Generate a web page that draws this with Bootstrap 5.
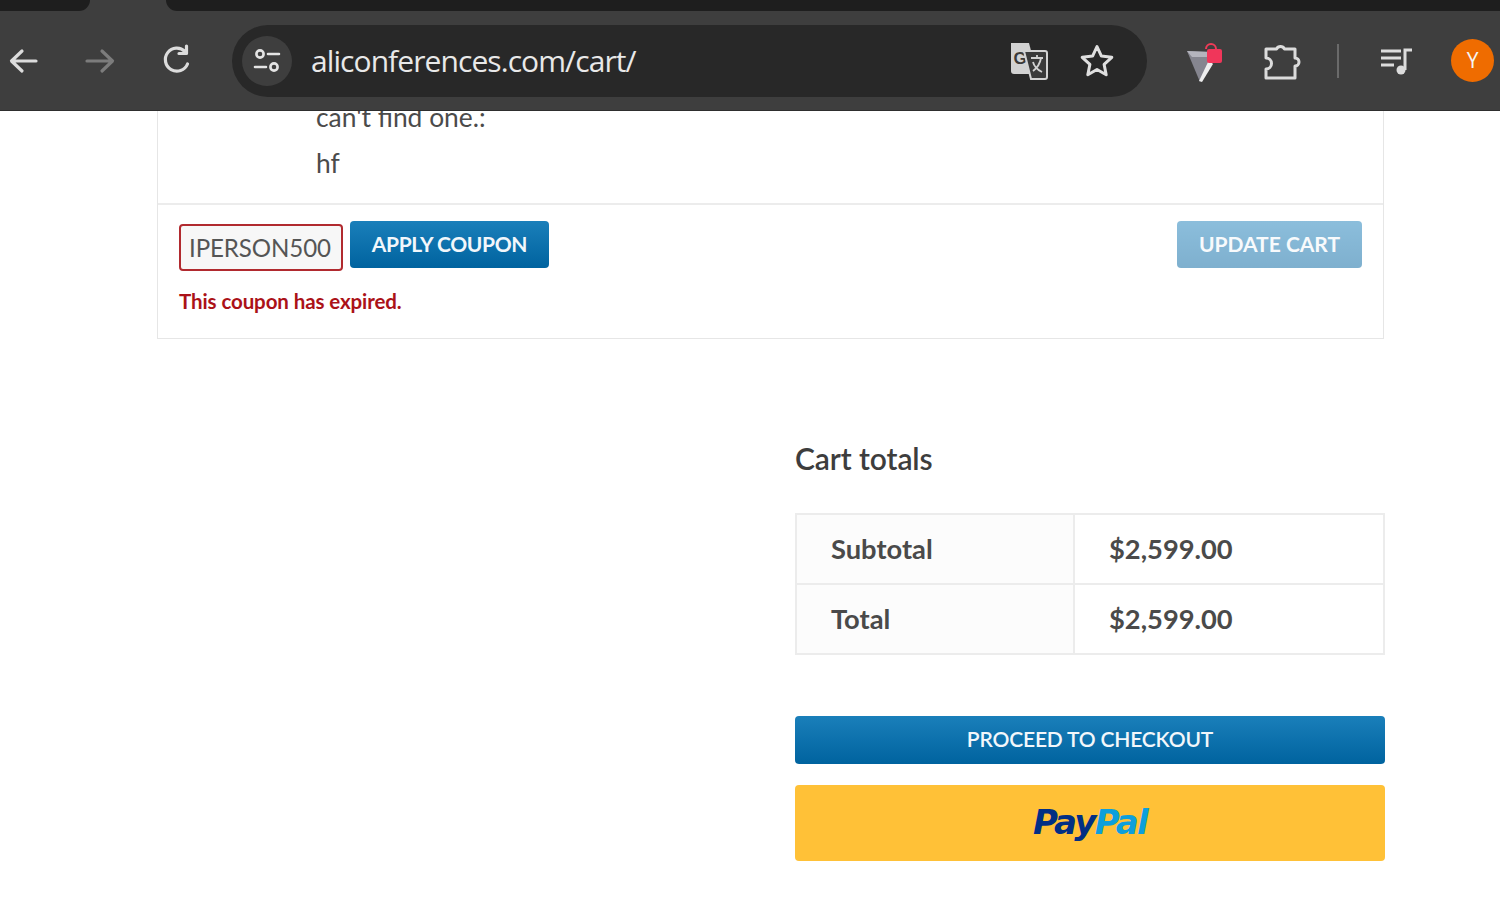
<!doctype html>
<html lang="en">
<head>
<meta charset="utf-8">
<title>Cart</title>
<link href="https://cdn.jsdelivr.net/npm/bootstrap@5.3.0/dist/css/bootstrap.min.css" rel="stylesheet">
<style>
html,body{height:897px;overflow:hidden;background:#fff}
body{font-family:Lato,"Open Sans",sans-serif;color:#444}
.tabstrip{height:11px;background:#3e3e3e}
.tab-left{width:90px;background:#1e1e1e;border-bottom-right-radius:14px}
.tab-right{margin-left:76px;background:#1e1e1e;border-bottom-left-radius:14px}
.tool-row{height:100px;background:#3e3e3e;padding-right:6px;border-bottom:1px solid #2e2e2e}
.nav-ic{width:76px;height:60px;flex:none}
.omni{width:915px;height:72px;margin-left:4px;border-radius:36px;background:#282828;padding:0 32px 0 10px}
.tune{width:50px;height:50px;border-radius:50%;background:#3e3e3e;flex:none}
.url{font-family:"Open Sans",sans-serif;font-size:30px;letter-spacing:-.92px;color:#e9e9e9;margin-left:19px;line-height:1}
.gap-star{margin-left:30px}
.gap-vpn{margin-left:37px}
.gap-puzzle{margin-left:36px}
.sep{width:2px;height:34px;background:#6a6a6a;margin-left:35px}
.gap-music{margin-left:39px}
.avatar{width:43px;height:43px;border-radius:50%;background:#ef6c00;color:#f5f5f5;font-size:21px;font-family:"Open Sans",sans-serif;flex:none}
.cartbox{margin-left:157px;width:1227px;border:1px solid #e6e6e6;border-top:0;height:228px}
.note-cell{height:94px;border-bottom:2px solid #ececec;padding-left:158px;overflow:hidden;font-size:26.4px;line-height:31px}
.note-line{margin:-9px 0 0;color:#4b4b4b}
.note-two{margin:15px 0 0;color:#4b4b4b}
.act-cell{padding:16px 21px 0}
.coupon{width:164px;height:47px;border:2px solid #b12a2f;border-radius:4px;background:#f7f7f7;color:#555;font-size:24.1px;letter-spacing:-.1px;padding:0 8px;margin-top:3px}
.blue-btn{background:linear-gradient(#1a7fba,#00639f);color:#f2f7fb;border:0;border-radius:4px;font-weight:700;height:47px;font-size:21px;letter-spacing:-.35px;padding:0 0 2px;text-transform:uppercase}
.blue-btn:hover{background:linear-gradient(#1a7fba,#00639f);color:#f2f7fb}
.apply{width:199px;margin-left:7px}
.update{width:185px;opacity:.5;letter-spacing:0}
.err{color:#ab1218;font-weight:700;font-size:20.5px;letter-spacing:-.1px;margin-top:18px;line-height:24px}
.totals-wrap{margin:0 115px 0 795px;width:590px}
.tot-title{font-size:30px;font-weight:600;letter-spacing:-.1px;color:#3d3d3d;margin:101px 0 0;line-height:36px}
.tot-grid{margin-top:37px;border:2px solid #ececec;border-collapse:collapse;width:590px;table-layout:fixed;font-size:27.3px;font-weight:700;color:#4a4a4a}
.tot-grid th,.tot-grid td{height:70px;padding:1px 0 0 34px;border:2px solid #ececec;vertical-align:middle}
.tot-grid th{width:278px;background:#fcfcfc;font-weight:700}
.checkout{width:590px;height:48px;font-size:21px;letter-spacing:-.18px;margin-top:61px;font-weight:600}
.paypal{width:590px;height:76px;margin-top:21px;background:#ffc137;border:0;border-radius:4px;font-family:"DejaVu Sans",sans-serif;font-size:34px;font-style:italic;font-weight:700;letter-spacing:-1.7px;line-height:1;padding:0 0 2px}
.paypal:hover{background:#ffc137}
.pp-a{color:#022f84}.pp-b{color:#0d9fdc}
</style>
</head>
<body>
<header>
  <div class="tabstrip d-flex"><div class="tab-left"></div><div class="tab-right flex-grow-1"></div></div>
  <div class="tool-row d-flex align-items-center">
    <svg class="nav-ic" viewBox="0 0 76 60" fill="none" stroke="#dcdcdc" stroke-width="3.2" stroke-linecap="round" stroke-linejoin="round"><path d="M36 30H12M22 20 11.500 30 22 40"/></svg>
    <svg class="nav-ic" viewBox="0 0 76 60" fill="none" stroke="#7c7c7c" stroke-width="3.2" stroke-linecap="round" stroke-linejoin="round"><path d="M11 30h25M26 20l10.500 10L26 40"/></svg>
    <svg class="nav-ic" viewBox="0 0 76 60" fill="none" stroke="#dcdcdc" stroke-width="3.2" stroke-linecap="round" stroke-linejoin="round"><path d="M33 20.500A11.500 11.500 0 1 0 35.500 33M34.500 15v7.500H27"/></svg>
    <div class="omni d-flex align-items-center">
      <div class="tune d-flex align-items-center justify-content-center">
        <svg width="30" height="30" viewBox="0 0 30 30" fill="none" stroke="#e4e4e4" stroke-width="2.6" stroke-linecap="round"><circle cx="8" cy="8" r="3.600"/><path d="M16 8h11M3 21h11"/><circle cx="22" cy="21" r="3.600"/></svg>
      </div>
      <span class="url">aliconferences.com/cart/</span>
      <svg class="ms-auto" width="40" height="40" viewBox="0 0 40 40"><path d="M2 2h18l8 31H5a3 3 0 0 1-3-3z" fill="#d2d2d2"/><text x="4.500" y="23" font-family="Liberation Sans,sans-serif" font-size="17" font-weight="700" fill="#3a3a3a">G</text><path d="M15 10h21a2 2 0 0 1 2 2v24a2 2 0 0 1-2 2H22z" fill="#3a3a3a" stroke="#d2d2d2" stroke-width="2"/><path d="M22 17h12M28 14v3M32 17c-1 6-4 10-8 13M24 21c1 4 5 8 9 10" fill="none" stroke="#d2d2d2" stroke-width="1.800"/></svg>
      <svg class="gap-star" width="36" height="36" viewBox="0 0 36 36" fill="none" stroke="#dfdfdf" stroke-width="3" stroke-linejoin="round"><path d="M18 3.500l4.400 9.600 10.400 1.200-7.700 7.100 2.100 10.300L18 26.500l-9.200 5.200 2.100-10.300-7.700-7.100 10.400-1.200z"/></svg>
    </div>
    <svg class="gap-vpn" width="42" height="42" viewBox="0 0 42 42"><path d="M3 11l24 1 1 7-12 23z" fill="#85858f"/><path d="M3 11l24 1-4 5H8z" fill="#b4b4bd"/><path d="M25 20l4 4-11 18-3-1z" fill="#eeeeee"/><path d="M22 9a5 5 0 0 1 10 0" fill="none" stroke="#ef3b57" stroke-width="2"/><rect x="23" y="9" width="15" height="14" rx="2" fill="#f0365a"/></svg>
    <svg class="gap-puzzle" width="40" height="40" viewBox="0 0 40 40" fill="none" stroke="#dcdcdc" stroke-width="3" stroke-linejoin="round"><path d="M4 8h10.500a4.500 4.500 0 0 1 8 0H33v9a4 4 0 0 1 0 8v12H4v-9a5.500 5.500 0 0 0 0-11z"/></svg>
    <div class="sep"></div>
    <svg class="gap-music" width="36" height="36" viewBox="0 0 36 36" fill="none" stroke="#dcdcdc" stroke-width="3"><path d="M3 8h20M3 15h20M3 22h13M27 27V7h7"/><circle cx="23" cy="27" r="4.500" fill="#dcdcdc" stroke="none"/></svg>
    <div class="avatar d-flex align-items-center justify-content-center ms-auto">Y</div>
  </div>
</header>
<main>
  <section class="cartbox">
    <div class="note-cell">
      <p class="note-line">can't find one.:</p>
      <p class="note-two">hf</p>
    </div>
    <div class="act-cell">
      <div class="d-flex align-items-start">
        <input class="coupon" type="text" value="IPERSON500" aria-label="Coupon">
        <button class="btn blue-btn apply" type="button">Apply coupon</button>
        <button class="btn blue-btn update ms-auto" type="button">Update cart</button>
      </div>
      <div class="err">This coupon has expired.</div>
    </div>
  </section>
  <section class="totals-wrap">
    <h2 class="tot-title">Cart totals</h2>
    <table class="tot-grid">
      <tr><th>Subtotal</th><td>$2,599.00</td></tr>
      <tr><th>Total</th><td>$2,599.00</td></tr>
    </table>
    <a class="btn blue-btn checkout d-flex align-items-center justify-content-center" href="#">Proceed to checkout</a>
    <a class="btn paypal d-flex align-items-center justify-content-center" href="#"><span class="pp-a">Pay</span><span class="pp-b">Pal</span></a>
  </section>
</main>
</body>
</html>
